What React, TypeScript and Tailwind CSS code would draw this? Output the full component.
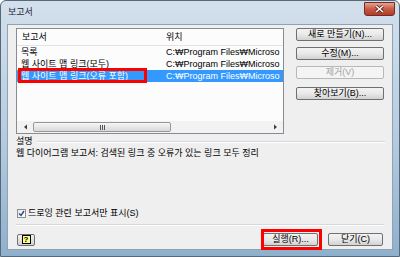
import React from 'react';

const font = "font-[family-name:'Liberation_Sans','Noto_Sans_CJK_KR',sans-serif]";

const Btn: React.FC<{ label: string; disabled?: boolean; className?: string }> = ({ label, disabled, className = '' }) => (
  <div
    className={
      'h-[13px] flex items-center justify-center rounded-[2px] border text-[9px] leading-none ' +
      (disabled
        ? 'border-[#b5b9bc] bg-[#f4f4f4] text-[#a3a3a3] '
        : 'border-[#707070] bg-gradient-to-b from-[#f3f3f3] via-[#e9e9e9] to-[#d2d2d2] text-black ') +
      className
    }
  >
    {label}
  </div>
);

const rows = [
  { name: '목록', path: 'C:₩Program Files₩Microso' },
  { name: '웹 사이트 맵 링크(모두)', path: 'C:₩Program Files₩Microso' },
  { name: '웹 사이트 맵 링크(오류 포함)', path: 'C:₩Program Files₩Microso', selected: true },
];

export default function App() {
  return (
    <div className={`w-[400px] h-[257px] flex flex-col border border-[#56697b] rounded-t-[6px] overflow-hidden bg-gradient-to-b from-[#d3e0ec] via-[#b9cde0] to-[#8fb0cc] ${font}`}>
      {/* Title bar */}
      <div className="h-[23px] flex items-start justify-between pl-[7px] pr-[4px]">
        <span className="mt-[5px] text-[9px] leading-[12px] text-[#1e2a36]">보고서</span>
        <div className="mt-[1px] w-[31px] h-[14px] rounded-b-[3px] border border-[#6e2e24] bg-gradient-to-b from-[#e4a395] via-[#c85a45] to-[#b43a26] flex items-center justify-center">
          <svg width="9" height="8" viewBox="0 0 9 8">
            <path d="M1 1 L8 7 M8 1 L1 7" stroke="#5a1f16" strokeWidth="3" />
            <path d="M1 1 L8 7 M8 1 L1 7" stroke="#ffffff" strokeWidth="1.6" />
          </svg>
        </div>
      </div>

      {/* Client */}
      <div className="flex-1 flex px-[6px] pb-[6px]">
        <div className="flex-1 flex flex-col bg-[#efefef] border border-[#8ea2b5] text-[9px] leading-[12px] text-black">
          {/* list + buttons */}
          <div className="flex pl-[8px] pt-[3px] gap-[12px]">
            <div className="relative w-[268px] h-[106px] bg-[#fcfcfc] border border-[#888c92] flex flex-col overflow-hidden">
              <div className="h-[17px] flex items-center border-b border-[#e3e3e3] shrink-0">
                <span className="w-[144px] pl-[5px]">보고서</span>
                <span className="pl-[5px]">위치</span>
              </div>
              <div className="flex-1 flex flex-col">
                {rows.map((r) => (
                  <div
                    key={r.name}
                    className={'h-[12px] flex items-center whitespace-nowrap ' + (r.selected ? 'bg-[#3399ff] text-white' : '')}
                  >
                    <span className="w-[144px] shrink-0 pl-[4px]">{r.name}</span>
                    <span className="pl-[5px] flex-1 min-w-0 overflow-hidden">{r.path}</span>
                  </div>
                ))}
              </div>
              {/* horizontal scrollbar */}
              <div className="h-[12px] shrink-0 flex items-center bg-[#f2f2f2] px-[2px]">
                <svg width="8" height="8" viewBox="0 0 8 8" className="shrink-0 ml-[3px]">
                  <path d="M5 1.5 L2 4 L5 6.5 Z" fill="#3c3c3c" />
                </svg>
                <div className="ml-[3px] w-[138px] h-[10px] rounded-[2px] border border-[#979797] bg-gradient-to-b from-[#f6f6f6] to-[#d9d9d9] flex items-center justify-center">
                  <div className="flex gap-[1px]">
                    <div className="w-px h-[5px] bg-[#555]" />
                    <div className="w-px h-[5px] bg-[#555]" />
                    <div className="w-px h-[5px] bg-[#555]" />
                  </div>
                </div>
                <div className="flex-1" />
                <svg width="8" height="8" viewBox="0 0 8 8" className="shrink-0 mr-[2px]">
                  <path d="M3 1.5 L6 4 L3 6.5 Z" fill="#3c3c3c" />
                </svg>
              </div>
              {/* annotation box */}
              <div className="absolute left-[1px] top-[39px] w-[129px] h-[15px] border-[3px] border-[#ff0000]" />
            </div>

            <div className="w-[88px] flex flex-col">
              <Btn label="새로 만들기(N)..." />
              <Btn label="수정(M)..." className="mt-[6px]" />
              <Btn label="제거(V)" disabled className="mt-[6px]" />
              <Btn label="찾아보기(B)..." className="mt-[8px]" />
            </div>
          </div>

          {/* description */}
          <div className="mt-[1px] pl-[8px] pr-[7px] h-[12px] flex items-center gap-[4px]">
            <span>설명</span>
            <div className="flex-1 flex flex-col mt-[1px]">
              <div className="h-px bg-[#d3d9de]" />
              <div className="h-px bg-white" />
            </div>
          </div>
          <div className="pl-[8px] h-[12px] flex items-center whitespace-nowrap">
            웹 다이어그램 보고서: 검색된 링크 중 오류가 있는 링크 모두 정리
          </div>

          {/* checkbox */}
          <div className="mt-[48px] pl-[9px] h-[12px] flex items-center gap-[2px]">
            <div className="w-[9px] h-[9px] border border-[#8e8f8f] bg-gradient-to-br from-[#e8e8e8] to-white flex items-center justify-center">
              <svg width="7" height="7" viewBox="0 0 7 7">
                <path d="M1 3.5 L3 5.5 L6 1" stroke="#2a4a8a" strokeWidth="1.4" fill="none" />
              </svg>
            </div>
            <span>드로잉 관련 보고서만 표시(S)</span>
          </div>

          {/* separator */}
          <div className="mt-[5px] mx-[8px] flex flex-col">
            <div className="h-px bg-[#d3d9de]" />
            <div className="h-px bg-white" />
          </div>

          {/* bottom buttons */}
          <div className="mt-[7px] pl-[9px] pr-[9px] flex items-center">
            <div className="w-[18px] h-[12px] rounded-[2px] border border-[#707070] bg-gradient-to-b from-[#f3f3f3] to-[#d2d2d2] flex items-center justify-center">
              <div className="w-[9px] h-[9px] border border-black bg-[#ffff88] flex items-center justify-center text-[8px] leading-none font-bold">?</div>
            </div>
            <div className="flex-1" />
            <div className="relative">
              <Btn label="실행(R)..." className="w-[55px] h-[12px]" />
              <div className="absolute -left-[2px] -right-[4px] -top-[4px] -bottom-[4px] border-[3px] border-[#ff0000]" />
            </div>
            <Btn label="닫기(C)" className="ml-[10px] w-[55px] h-[12px]" />
          </div>
        </div>
      </div>
    </div>
  );
}
